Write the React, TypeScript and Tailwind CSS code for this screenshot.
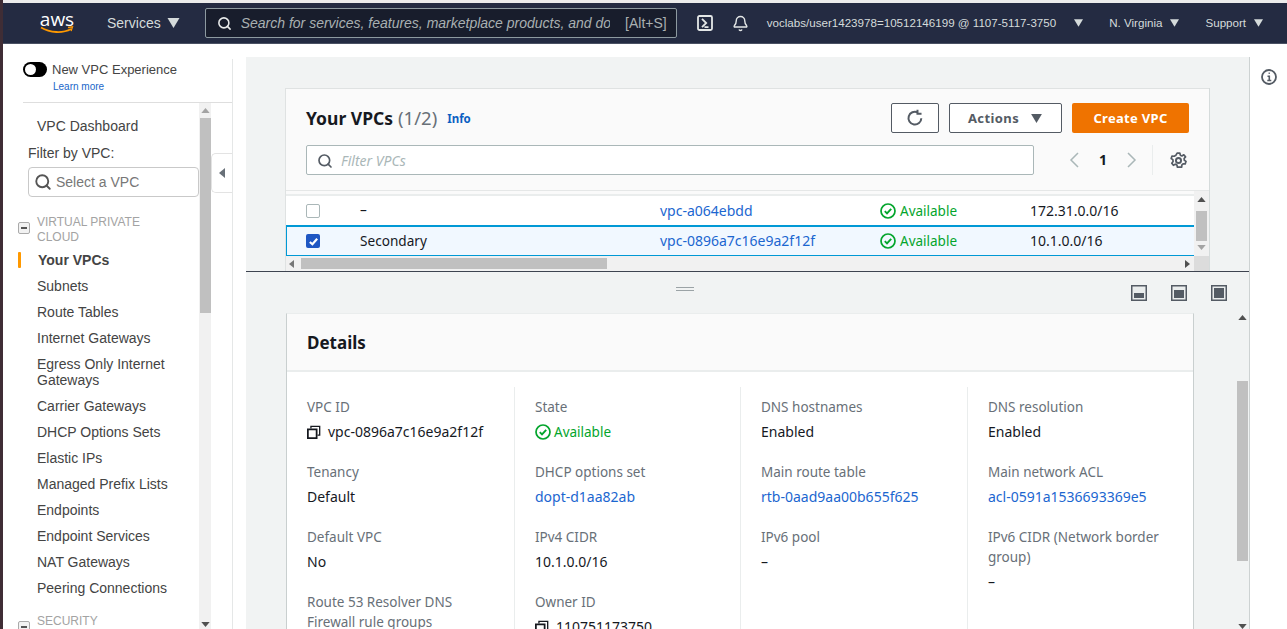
import { Bell, Search } from "lucide-react";

const navLinks = [
  "Subnets",
  "Route Tables",
  "Internet Gateways",
  "Egress Only Internet Gateways",
  "Carrier Gateways",
  "DHCP Options Sets",
  "Elastic IPs",
  "Managed Prefix Lists",
  "Endpoints",
  "Endpoint Services",
  "NAT Gateways",
  "Peering Connections",
];

type Field = {
  label: string;
  value?: string;
  kind?: "link" | "copy" | "status";
};

const detailColumns: Field[][] = [
  [
    { label: "VPC ID", value: "vpc-0896a7c16e9a2f12f", kind: "copy" },
    { label: "Tenancy", value: "Default" },
    { label: "Default VPC", value: "No" },
    { label: "Route 53 Resolver DNS Firewall rule groups", value: "–" },
  ],
  [
    { label: "State", value: "Available", kind: "status" },
    { label: "DHCP options set", value: "dopt-d1aa82ab", kind: "link" },
    { label: "IPv4 CIDR", value: "10.1.0.0/16" },
    { label: "Owner ID", value: "110751173750", kind: "copy" },
  ],
  [
    { label: "DNS hostnames", value: "Enabled" },
    { label: "Main route table", value: "rtb-0aad9aa00b655f625", kind: "link" },
    { label: "IPv6 pool", value: "–" },
  ],
  [
    { label: "DNS resolution", value: "Enabled" },
    { label: "Main network ACL", value: "acl-0591a1536693369e5", kind: "link" },
    { label: "IPv6 CIDR (Network border group)", value: "–" },
  ],
];

function Caret({ className }: { className?: string }) {
  return (
    <svg viewBox="0 0 12 10" className={className} fill="currentColor" aria-hidden>
      <path d="M0 0h12L6 10z" />
    </svg>
  );
}

function CheckIcon() {
  return (
    <svg viewBox="0 0 16 16" className="size-4 shrink-0 text-[#03a52c]" fill="none" stroke="currentColor" aria-hidden>
      <circle cx="8" cy="8" r="7" strokeWidth="1.700" />
      <path d="M4.800 8.200l2.200 2.200 4.200-4.600" strokeWidth="1.900" />
    </svg>
  );
}

function CopyIcon() {
  return (
    <svg viewBox="0 0 16 16" className="size-[14px] shrink-0 text-[#16191f]" fill="none" stroke="currentColor" strokeWidth="2" aria-hidden>
      <path d="M4.500 4V1.500h10v10H12" strokeWidth="1.500" />
      <rect x="1" y="5" width="10" height="10" />
    </svg>
  );
}

function PanelIcon({ top }: { top: number }) {
  return (
    <svg viewBox="0 0 16 16" className="size-4" aria-hidden>
      <rect x="0.750" y="0.750" width="14.500" height="14.500" fill="#eaeded" stroke="#545b64" strokeWidth="1.500" />
      <rect x="3" y={top} width="10" height={13 - top} fill="#545b64" />
    </svg>
  );
}

function ScrollArrow({ up, muted }: { up?: boolean; muted?: boolean }) {
  return (
    <svg viewBox="0 0 10 6" className={`h-[5px] w-[9px] ${muted ? "text-[#a3a3a3]" : "text-[#505050]"}`} fill="currentColor" aria-hidden>
      <path d={up ? "M5 0l5 6H0z" : "M0 0h10L5 6z"} />
    </svg>
  );
}

function TopNav() {
  return (
    <header className="flex h-[41px] items-center border-b border-[#4a5163] bg-[#242b42] font-['Liberation_Sans',sans-serif] text-[#d5dbdb]">
      <div className="ml-[37px] flex w-[34px] flex-col items-center">
        <span className="font-['Open_Sans',sans-serif] text-[19px] leading-[15px] text-white">aws</span>
        <svg viewBox="0 0 34 8" className="-mt-px h-[8px] w-[34px]" fill="none" aria-hidden>
          <path d="M1 1.500C10 7 23 7.500 31 3" stroke="#ff9900" strokeWidth="1.800" />
          <path d="M28 1.500l4.500-.6-1.400 4.200" stroke="#ff9900" strokeWidth="1.300" />
        </svg>
      </div>
      <span className="ml-[33px] text-sm">Services</span>
      <Caret className="ml-[6px] h-[10px] w-[13px]" />
      <div className="ml-[25px] flex h-[30px] w-[472px] items-center rounded-[2px] border border-[#8d9aa0] bg-[#181d2c] pl-[11px] pr-[9px]">
        <Search className="size-[15px] shrink-0 text-[#e8eaea]" strokeWidth={2.5} />
        <span className="ml-[9px] w-[369px] overflow-hidden text-sm whitespace-nowrap text-[#a9b0b1] italic">
          Search for services, features, marketplace products, and docs
        </span>
        <span className="ml-auto text-sm text-[#a9b0b1]">[Alt+S]</span>
      </div>
      <svg viewBox="0 0 16 16" className="ml-[20px] size-4 text-[#e4e7e7]" fill="none" stroke="currentColor" aria-hidden>
        <rect x="1" y="1" width="14" height="14" rx="1.500" strokeWidth="1.800" />
        <path d="M5 3.800L9.200 8 5 12.200M7.500 12.200h4" strokeWidth="1.800" />
      </svg>
      <Bell className="ml-[19px] size-[17px] text-[#e4e7e7]" strokeWidth={2} />
      <span className="ml-[18px] text-[11.600px] whitespace-nowrap">voclabs/user1423978=10512146199 @ 1107-5117-3750</span>
      <Caret className="ml-[18px] h-[8px] w-[9px]" />
      <span className="ml-[26px] text-[11.600px] whitespace-nowrap">N. Virginia</span>
      <Caret className="ml-[8px] h-[8px] w-[9px]" />
      <span className="ml-[26px] text-[11.600px]">Support</span>
      <Caret className="ml-[8px] h-[8px] w-[9px]" />
    </header>
  );
}

function Sidebar() {
  return (
    <aside className="mt-[15px] flex h-[570px] w-[230px] flex-col border-r border-[#e5e7e7] font-['Liberation_Sans',sans-serif] text-[#444]">
      <div className="ml-5 flex h-[44px] flex-col border-b border-[#dedede]">
        <div className="flex items-center pt-[3px]">
          <span className="flex h-[15px] w-[24px] items-center rounded-full bg-black pl-[2px]">
            <span className="size-[11px] rounded-full bg-white" />
          </span>
          <span className="ml-[5px] text-[13px] leading-[14px]">New VPC Experience</span>
        </div>
        <span className="mt-[4px] ml-[30px] text-[10px] leading-3 text-[#1a66c9]">Learn more</span>
      </div>
      <div className="flex min-h-0 flex-1">
        <div className="w-[196px] overflow-hidden">
          <div className="pt-[13px] pl-[34px] text-sm leading-[20px]">VPC Dashboard</div>
          <div className="mt-[7px] pl-[25px] text-sm leading-[20px]">Filter by VPC:</div>
          <div className="mt-[4px] ml-[25px] flex h-[30px] w-[171px] items-center rounded-[4px] border border-[#c9c9c9] pl-[5px] text-sm text-[#777]">
            <Search className="size-[18px] text-[#555]" strokeWidth={2.5} />
            <span className="ml-[4px]">Select a VPC</span>
          </div>
          <div className="mt-[18px] flex pl-[15px]">
            <span className="mt-[7px] flex h-[12px] w-[12px] items-center justify-center rounded-[2px] border border-[#aaa] bg-[#f2f2f2]">
              <span className="h-[2px] w-[6px] bg-[#555]" />
            </span>
            <span className="ml-[7px] w-[130px] text-xs leading-[15px] text-[#a3a3a3]">VIRTUAL PRIVATE CLOUD</span>
          </div>
          <div className="mt-[7px] flex h-[16px] items-center pl-[15px]">
            <span className="h-[16px] w-[3px] rounded-[1px] bg-[#ff9900]" />
            <span className="ml-[17px] text-sm font-bold">Your VPCs</span>
          </div>
          <ul className="mt-[5px] text-sm leading-4">
            {navLinks.map((link) => (
              <li key={link} className="py-[5px] pr-[20px] pl-[34px]">
                {link}
              </li>
            ))}
          </ul>
          <div className="mt-[13px] flex pl-[15px]">
            <span className="mt-[7px] flex h-[12px] w-[12px] items-center justify-center rounded-[2px] border border-[#aaa] bg-[#f2f2f2]">
              <span className="h-[2px] w-[6px] bg-[#555]" />
            </span>
            <span className="ml-[7px] text-xs leading-[15px] text-[#a3a3a3]">SECURITY</span>
          </div>
        </div>
        <div className="flex w-[12px] flex-col items-center bg-[#f1f1f1]">
          <div className="pt-[5px] pb-[5px]">
            <ScrollArrow up muted />
          </div>
          <div className="h-[195px] w-[11px] bg-[#c0c0c0]" />
          <div className="mt-auto pb-[2px]">
            <ScrollArrow />
          </div>
        </div>
        <div className="flex-1">
          <div className="mt-[50px] flex h-[40px] items-center justify-center rounded-l-[5px] border-y border-l border-[#e3e3e3] pr-[1px]">
            <span className="h-0 w-0 border-y-[5px] border-r-[6px] border-y-transparent border-r-[#687078]" />
          </div>
        </div>
      </div>
    </aside>
  );
}

function HeaderBar() {
  return (
    <div className="border-b border-[#e5e7e7] bg-[#fafafa] px-5 pt-[14px] pb-[15px]">
      <div className="flex items-center">
        <h1 className="text-[17.500px] leading-[30px] font-bold text-[#16191f]">Your VPCs</h1>
        <span className="ml-[5px] text-[18.500px] leading-[30px] text-[#687078]">(1/2)</span>
        <span className="mt-[2px] ml-[10px] text-[11.500px] font-bold text-[#0b5fc2]">Info</span>
        <button className="ml-auto flex h-[30px] w-[48px] items-center justify-center rounded-[2px] border border-[#545b64] bg-white text-[#545b64]">
          <svg viewBox="0 0 16 16" className="size-[18px]" fill="none" stroke="currentColor" strokeWidth="1.800" aria-hidden>
            <path d="M13.600 8.200A5.700 5.700 0 1 1 10.400 3" />
            <path d="M10.200 0.600v3.600h3.600" />
          </svg>
        </button>
        <button className="ml-[10px] flex h-[30px] w-[113px] items-center justify-center rounded-[2px] border border-[#545b64] bg-white pt-px text-[13px] font-bold tracking-[0.4px] text-[#545b64]">
          Actions
          <Caret className="ml-[11px] h-[9px] w-[13px]" />
        </button>
        <button className="ml-[10px] h-[30px] w-[117px] rounded-[2px] bg-[#ef7300] pt-px text-[13px] font-bold tracking-[0.3px] text-white">
          Create VPC
        </button>
      </div>
      <div className="mt-[12px] flex items-center">
        <div className="flex h-[30px] w-[728px] items-center rounded-[2px] border border-[#aab7b8] bg-white pl-[10px]">
          <Search className="mt-px size-4 text-[#545b64]" strokeWidth={2.5} />
          <span className="mt-px ml-[8px] text-[14px] text-[#aab7b8] italic">Filter VPCs</span>
        </div>
        <svg viewBox="0 0 10 16" className="ml-[35px] h-4 w-[10px] text-[#aab7b8]" fill="none" stroke="currentColor" strokeWidth="1.500" aria-hidden>
          <path d="M9 1L2 8l7 7" />
        </svg>
        <span className="ml-[20px] text-sm font-bold text-[#16191f]">1</span>
        <svg viewBox="0 0 10 16" className="ml-[20px] h-4 w-[10px] text-[#aab7b8]" fill="none" stroke="currentColor" strokeWidth="1.500" aria-hidden>
          <path d="M1 1l7 7-7 7" />
        </svg>
        <span className="ml-[15px] h-[30px] w-px bg-[#eaeded]" />
        <svg viewBox="0 0 16 16" className="ml-[17px] size-[17px] text-[#545b64]" fill="none" stroke="currentColor" aria-hidden>
          <circle cx="8" cy="8" r="2.400" strokeWidth="1.800" />
          <path
            d="M6.700 1h2.600l.4 2 1.500.7 1.800-1.100 1.600 2-1.300 1.500.2 1.700 1.600 1-.8 2.400-2-.1-1.200 1.200-.1 2H7l-.5-2-1.500-.8-1.800 1-1.500-2 1.200-1.600-.2-1.700-1.600-1.100.8-2.300 2 .2L5.600 3z"
            strokeWidth="1.600"
            strokeLinejoin="round"
          />
        </svg>
      </div>
    </div>
  );
}

function VpcRow({
  name,
  id,
  cidr,
  selected,
}: {
  name: string;
  id: string;
  cidr: string;
  selected?: boolean;
}) {
  return (
    <div
      className={
        selected
          ? "flex h-[30px] items-center border-y border-l border-[#0099d5] bg-[#f1f8ff]"
          : "flex h-[30px] items-center border-b border-[#0099d5] pl-px"
      }
    >
      <span className="w-[73px] pl-[19px]">
        {selected ? (
          <span className="flex size-[14px] items-center justify-center rounded-[2px] bg-[#1f57c3]">
            <svg viewBox="0 0 12 12" className="size-[11px]" fill="none" stroke="white" strokeWidth="2.400" aria-hidden>
              <path d="M2 6.500l2.800 2.500L10 3" />
            </svg>
          </span>
        ) : (
          <span className="block size-[14px] rounded-[2px] border border-[#aab7b8] bg-white" />
        )}
      </span>
      <span className="w-[300px] text-[13.600px] text-[#16191f]">{name}</span>
      <span className="w-[220px] text-sm text-[#1b66d0]">{id}</span>
      <span className="flex w-[151px] items-center gap-[4px] text-[13.500px] text-[#03a52c]">
        <CheckIcon />
        <span className="pt-px">Available</span>
      </span>
      <span className="-ml-px text-sm text-[#16191f]">{cidr}</span>
    </div>
  );
}

function VpcTable() {
  return (
    <div className="flex h-[65px] bg-[#fafafa]">
      <div className="min-w-0 flex-1 pt-[3px]">
        <div className="border-t-2 border-[#eaeded] bg-white">
          <VpcRow name="–" id="vpc-a064ebdd" cidr="172.31.0.0/16" />
          <VpcRow name="Secondary" id="vpc-0896a7c16e9a2f12f" cidr="10.1.0.0/16" selected />
        </div>
      </div>
      <div className="flex w-[15px] flex-col items-center bg-[#f1f1f1] pt-[6px]">
        <ScrollArrow up />
        <div className="mt-[9px] h-[30px] w-[11px] bg-[#c0c0c0]" />
        <div className="mt-[4px]">
          <ScrollArrow muted />
        </div>
      </div>
    </div>
  );
}

function FieldBlock({ field }: { field: Field }) {
  return (
    <div>
      <div className="text-[13.500px] leading-5 text-[#687078]">{field.label}</div>
      <div
        className={`mt-[5px] flex items-center text-sm leading-5 text-[#16191f] ${
          field.kind === "status" ? "gap-[3px]" : "gap-[7px]"
        }`}
      >
        {field.kind === "copy" && <CopyIcon />}
        {field.kind === "status" && <CheckIcon />}
        <span
          className={
            field.kind === "link"
              ? "text-[#1b66d0]"
              : field.kind === "status"
                ? "pt-px text-[13.500px] leading-[19px] text-[#03a52c]"
                : ""
          }
        >
          {field.value}
        </span>
      </div>
    </div>
  );
}

function DetailsCard() {
  return (
    <section className="w-[908px] border-t border-r border-l border-r-[#c9cfcf] border-t-[#eaeded] border-l-[#c9cfcf] bg-white">
      <div className="flex h-[58px] items-center border-b-2 border-[#eaeded] bg-[#fafafa] pl-5">
        <h2 className="pt-px text-[17px] font-bold text-[#16191f]">Details</h2>
      </div>
      <div className="grid grid-cols-[228px_226px_227px_1fr] pt-[15px]">
        {detailColumns.map((col, i) => (
          <div
            key={col[0].label}
            className={
              i === 3
                ? "flex flex-col gap-5 px-5 pt-[10px]"
                : "flex flex-col gap-5 border-r border-[#eaeded] px-5 pt-[10px] pb-5"
            }
          >
            {col.map((field) => (
              <FieldBlock key={field.label} field={field} />
            ))}
          </div>
        ))}
      </div>
    </section>
  );
}

function MainPanel() {
  return (
    <main className="mt-[13px] ml-[13px] flex h-[572px] w-[1004px] flex-col overflow-hidden border-r border-[#cdd2d2] bg-[#f1f3f3] font-['Noto_Sans',sans-serif]">
      <div className="flex h-[214px] flex-col pt-[31px] pl-[39px]">
        <div className="flex h-[183px] w-[924px] flex-col border-t border-l border-[#dfe2e2] shadow-[1px_0_0_#d5dbdb]">
          <HeaderBar />
          <VpcTable />
          <div className="flex h-[15px] items-center bg-[#f1f1f1] pl-[3px]">
            <span className="h-0 w-0 border-y-[4px] border-r-[5px] border-y-transparent border-r-[#777]" />
            <span className="ml-[7px] h-[11px] w-[306px] bg-[#c0c0c0]" />
            <span className="mr-[4px] ml-auto h-0 w-0 border-y-[4px] border-l-[5px] border-y-transparent border-l-[#505050]" />
            <span className="h-[15px] w-[15px] bg-[#dcdcdc]" />
          </div>
        </div>
      </div>
      <div className="h-px bg-[#3e4450]" />
      <div className="flex min-h-0 flex-1 flex-col">
        <div className="flex h-[41px] items-start pt-[13px]">
          <div className="ml-[430px] flex h-[14px] w-[18px] flex-col gap-[2px] pt-[2px]">
            <span className="h-px bg-[#9ba3a6]" />
            <span className="h-px bg-[#9ba3a6]" />
          </div>
          <div className="mr-[22px] ml-auto flex gap-6">
            <PanelIcon top={8} />
            <PanelIcon top={5} />
            <PanelIcon top={3} />
          </div>
        </div>
        <div className="flex min-h-0 flex-1 pl-[40px]">
          <div className="min-w-0 flex-1 overflow-hidden">
            <DetailsCard />
          </div>
          <div className="flex w-[14px] flex-col items-center pt-[2px]">
            <ScrollArrow up />
            <div className="mt-[61px] h-[180px] w-[11px] bg-[#c0c0c0]" />
            <div className="mt-auto">
              <ScrollArrow />
            </div>
          </div>
        </div>
      </div>
    </main>
  );
}

export default function App() {
  return (
    <div className="flex h-[629px] w-[1287px] overflow-hidden bg-white">
      <div className="w-[3px] shrink-0 bg-[#3f2d35]" />
      <div className="flex min-w-0 flex-1 flex-col">
        <div className="h-[3px] bg-[#ececec]" />
        <TopNav />
        <div className="flex min-h-0 flex-1">
          <Sidebar />
          <MainPanel />
          <div className="flex flex-1 justify-center pt-[25px]">
            <svg viewBox="0 0 16 16" className="size-4 text-[#545b64]" fill="none" stroke="currentColor" aria-hidden>
              <circle cx="8" cy="8" r="7" strokeWidth="1.800" />
              <path d="M6.500 7.300H8.300v4M6.300 11.500h4M7.600 4.200h1.200" strokeWidth="1.600" />
            </svg>
          </div>
        </div>
      </div>
    </div>
  );
}
